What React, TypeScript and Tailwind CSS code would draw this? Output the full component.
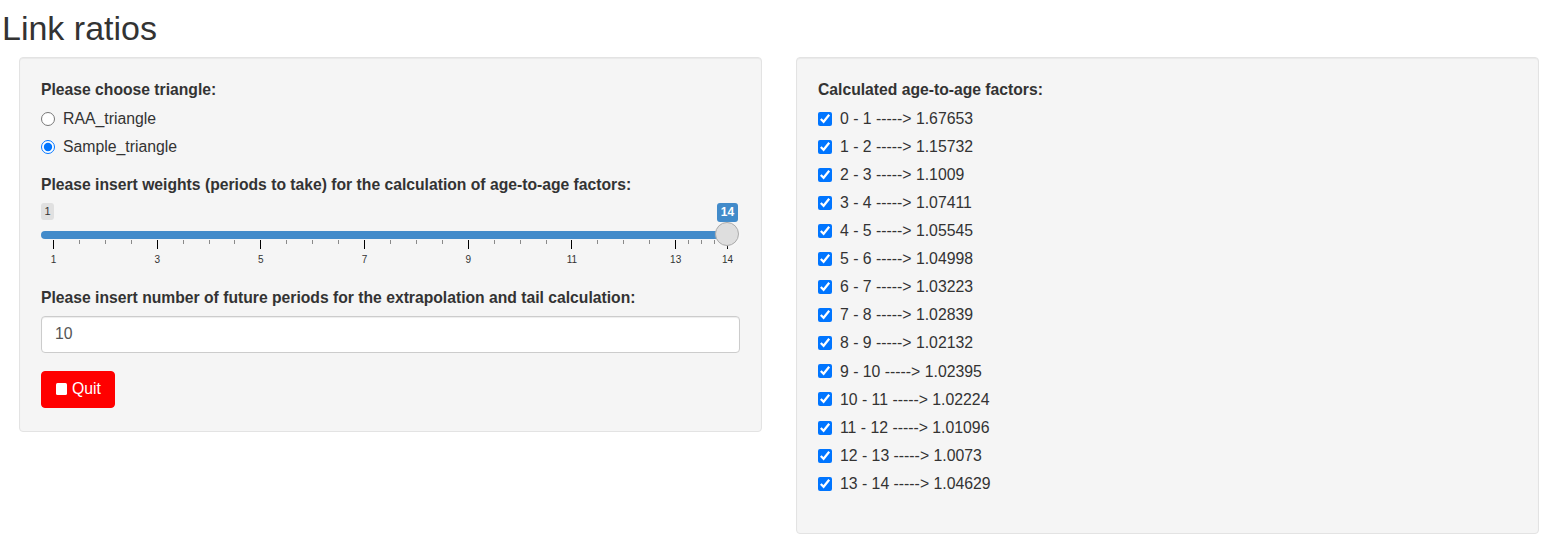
import React from "react"

const factors: [string, string][] = [
  ["0 - 1", "1.67653"],
  ["1 - 2", "1.15732"],
  ["2 - 3", "1.1009"],
  ["3 - 4", "1.07411"],
  ["4 - 5", "1.05545"],
  ["5 - 6", "1.04998"],
  ["6 - 7", "1.03223"],
  ["7 - 8", "1.02839"],
  ["8 - 9", "1.02132"],
  ["9 - 10", "1.02395"],
  ["10 - 11", "1.02224"],
  ["11 - 12", "1.01096"],
  ["12 - 13", "1.0073"],
  ["13 - 14", "1.04629"],
]

// slider grid: value 1 sits at x=12, value 14 at x=686 (relative to the well content)
const unit = 674 / 13
const pos = (v: number) => 12 + (v - 1) * unit

function SliderGrid() {
  const majors = [1, 3, 5, 7, 9, 11, 13, 14]
  const minors: number[] = []
  for (let i = 0; i < majors.length - 1; i++) {
    const a = pos(majors[i])
    const b = pos(majors[i + 1])
    for (let k = 1; k <= 3; k++) minors.push(a + ((b - a) * k) / 4)
  }
  return (
    <svg width="699" height="26" className="block">
      {minors.map((x, i) => (
        <rect key={"m" + i} x={Math.round(x)} y={0} width={1} height={4} fill="#8a8a8a" />
      ))}
      {majors.map((v) => (
        <rect key={"M" + v} x={Math.round(pos(v))} y={0} width={1} height={9} fill="#000" />
      ))}
      {majors.map((v) => (
        <text
          key={"t" + v}
          x={pos(v) + 0.5}
          y={22.5}
          textAnchor="middle"
          fontSize="10"
          fill="#333"
          fontFamily="'Liberation Sans', Arial, sans-serif"
        >
          {v}
        </text>
      ))}
    </svg>
  )
}

function Well({ children, className = "" }: { children: React.ReactNode; className?: string }) {
  return (
    <div
      className={
        "w-[743px] bg-[#f5f5f5] border border-[#e3e3e3] rounded-[4px] shadow-[inset_0_1px_1px_rgba(0,0,0,0.05)] px-[21px] pt-[21px] " +
        className
      }
    >
      {children}
    </div>
  )
}

export default function App() {
  return (
    <div className="min-h-screen bg-white text-[#333] font-['Liberation_Sans',Arial,sans-serif] text-[15.8px]">
      <h2 className="pt-[10px] pl-[2px] text-[34px] leading-[36px] font-normal">Link ratios</h2>

      <div className="flex items-start mt-[11px]">
        <Well className="ml-[19px] pb-[23px]">
          <div className="font-bold leading-[22px] text-[15.7px]">Please choose triangle:</div>
          <div className="mt-[6.5px] flex flex-col gap-[6px]">
            <label className="flex items-center h-[22px] gap-[8px]">
              <input type="radio" name="tri" className="w-[14px] h-[14px] accent-[#0075ff]" />
              <span>RAA_triangle</span>
            </label>
            <label className="flex items-center h-[22px] gap-[8px]">
              <input type="radio" name="tri" defaultChecked className="w-[14px] h-[14px] accent-[#0075ff]" />
              <span>Sample_triangle</span>
            </label>
          </div>

          <div className="mt-[16.5px] font-bold leading-[22px] text-[15.7px]">
            Please insert weights (periods to take) for the calculation of age-to-age factors:
          </div>

          <div className="mt-[6.5px]">
            <div className="flex h-[18px]">
              <span className="w-[13px] h-[17px] rounded-[3px] bg-[#e0e0e0] text-[11px] leading-[17px] text-center text-[#333]">
                1
              </span>
              <span className="ml-auto mr-[2px] w-[21px] h-[19px] rounded-[3px] bg-[#428bca] text-white text-[12px] font-bold leading-[19px] text-center">
                14
              </span>
            </div>
            <div className="relative mt-[10px] h-[8px]">
              <div className="h-[8px] w-[686px] bg-[#428bca] rounded-l-full" />
              <div className="absolute left-[674px] top-[-9px] w-[24px] h-[24px] rounded-full bg-[#dedede] border border-[#ababab] shadow-[1px_1px_3px_rgba(255,255,255,0.3)]" />
            </div>
            <div className="mt-[1px]">
              <SliderGrid />
            </div>
          </div>

          <div className="mt-[21px] font-bold leading-[22px] text-[15.7px]">
            Please insert number of future periods for the extrapolation and tail calculation:
          </div>
          <input
            type="text"
            defaultValue="10"
            className="mt-[7px] block w-full h-[37px] bg-white border border-[#ccc] rounded-[4px] px-[13px] text-[15.8px] text-[#555] shadow-[inset_0_1px_1px_rgba(0,0,0,0.075)] outline-none"
          />

          <button className="mt-[18px] flex items-center gap-[5px] h-[37px] w-[74px] px-[14px] bg-[#ff0000] text-white border border-[#f00] rounded-[4px] text-[15.8px]">
            <svg width="11" height="12" viewBox="0 0 11 12" className="shrink-0">
              <rect x="0" y="0" width="11" height="12" rx="1.5" fill="#fff" />
            </svg>
            <span>Quit</span>
          </button>
        </Well>

        <Well className="ml-[34px] pb-[21px]">
          <div className="font-bold leading-[22px] text-[15.7px]">Calculated age-to-age factors:</div>
          <div className="mt-[6.5px] mb-[17px] flex flex-col gap-[6.1px]">
            {factors.map(([p, f]) => (
              <label key={p} className="flex items-center h-[22px] gap-[8px]">
                <input type="checkbox" defaultChecked className="w-[14px] h-[14px] accent-[#0075ff]" />
                <span>
                  {p} -----&gt; {f}
                </span>
              </label>
            ))}
          </div>
        </Well>
      </div>
    </div>
  )
}
